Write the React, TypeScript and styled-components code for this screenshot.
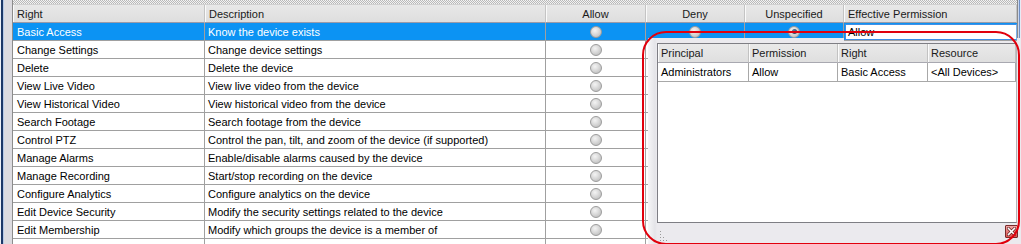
import React from 'react';
import styled, { createGlobalStyle, css } from 'styled-components';

const Global = createGlobalStyle`
  html, body { margin: 0; padding: 0; background: #ffffff; }
  body {
    width: 1021px; height: 244px; overflow: hidden;
    font-family: "Liberation Sans", Arial, sans-serif;
    font-size: 11px; color: #000;
  }
`;

const Screen = styled.div`
  position: relative;
  width: 1021px;
  height: 244px;
  display: flex;
  overflow: hidden;
  background: #dedde2;
`;

const FrameEdge = styled.div`
  flex: none;
  width: 4px;
  background: linear-gradient(to right, #eef1f7 0 1px, #1d3868 1px 3px, #b7c9e6 3px 4px);
`;

const RightEdge = styled.div`
  flex: none;
  width: 4px;
  background: linear-gradient(to right, #8a8a8a 0 1px, #c9d6ec 1px 2px, #6f8fc4 2px 3px, #e6ebf5 3px 4px);
`;

const Gutter = styled.div`
  flex: none;
  width: 8px;
  background: #dcdbe0;
  border-right: 1px solid #8c8c8c;
`;

const Main = styled.div`
  flex: 1;
  display: flex;
  flex-direction: column;
  min-width: 0;
  background: #fff;
`;

const Hatch = styled.div`
  flex: none;
  height: 5px;
  background-color: #f2f2f2;
  background-image: repeating-conic-gradient(#b9b9b9 0 25%, #f2f2f2 0 50%);
  background-size: 2px 2px;
  border-bottom: 1px solid #d0d0d0;
  box-sizing: border-box;
`;

const Grid = styled.div`
  display: grid;
  grid-template-columns: 192px 341px 100px 99px 99px 1fr;
  grid-auto-rows: 18px;
`;

const HeadCell = styled.div<{ $center?: boolean }>`
  height: 18px;
  box-sizing: border-box;
  background: linear-gradient(#e8e8e8, #dedede);
  border-right: 1px solid #c4c4c4;
  box-shadow: inset 1px 0 0 #fafafa;
  border-bottom: 1px solid #9a9aa8;
  display: flex;
  align-items: center;
  justify-content: ${p => (p.$center ? 'center' : 'flex-start')};
  padding-left: ${p => (p.$center ? '0' : '4px')};
  padding-top: 1px;
  white-space: nowrap;
  color: #1a1a1a;
`;

const Cell = styled.div<{ $selected?: boolean; $center?: boolean; $first?: boolean }>`
  box-sizing: border-box;
  height: 18px;
  border-right: 1px solid #a0a0a0;
  border-bottom: 1px solid #a0a0a0;
  display: flex;
  align-items: center;
  justify-content: ${p => (p.$center ? 'center' : 'flex-start')};
  padding-left: ${p => (p.$center ? '0' : p.$first ? '4px' : '3px')};
  padding-top: ${p => (p.$center ? '0' : '1px')};
  white-space: nowrap;
  overflow: hidden;
  ${p =>
    p.$selected &&
    css`
      background: #0c93f3;
      color: #fff;
    `}
`;

const EditorCell = styled.div`
  position: relative;
  z-index: 3;
  box-sizing: border-box;
  height: 18px;
  background: #0c93f3;
  border-bottom: 1px solid #a0a0a0;
  padding: 1px 0 0 1px;
  display: flex;
`;

const EditorBox = styled.div`
  flex: 1;
  background: #fff;
  border: 1px solid #3d8ee6;
  border-right-color: #7fb2ea;
  box-sizing: border-box;
  display: flex;
  align-items: center;
  padding-left: 2px;
  color: #000;
`;

const Radio = styled.span<{ $checked?: boolean }>`
  width: 12px;
  height: 12px;
  border-radius: 50%;
  box-sizing: border-box;
  border: 1px solid #9c9c9c;
  background: radial-gradient(circle at 40% 35%, #f4f4f4 0, #dcdcdc 40%, #b4b4b4 100%);
  display: flex;
  align-items: center;
  justify-content: center;
  ${p =>
    p.$checked &&
    css`
      &::after {
        content: '';
        width: 5px;
        height: 5px;
        border-radius: 50%;
        background: radial-gradient(circle at 40% 35%, #4f7fa8, #12304e);
      }
    `}
`;

/* Floating popup window */
const Popup = styled.div`
  position: absolute;
  left: 648px;
  top: 38px;
  width: 373px;
  height: 206px;
  z-index: 2;
  display: flex;
  flex-direction: column;
  background: linear-gradient(to right, #f6f6f8 0, #e4e4e8 7px, #ebeaee 9px);
`;

const List = styled.div`
  margin: 5px 4px 0 9px;
  height: 180px;
  flex: none;
  box-sizing: border-box;
  border: 1px solid #7e7e84;
  border-right-color: #b4b4b8;
  background: #fff;
  display: grid;
  grid-template-columns: 91px 89px 90px 1fr;
  grid-auto-rows: min-content;
`;

const ListHead = styled.div`
  height: 19px;
  box-sizing: border-box;
  background: linear-gradient(#e9e9e9, #dfdfdf);
  border-right: 1px solid #c2c2c2;
  box-shadow: inset 1px 0 0 #fbfbfb;
  border-bottom: 1px solid #a8a8b0;
  display: flex;
  align-items: center;
  padding-left: 3px;
  white-space: nowrap;
  color: #1a1a1a;
`;

const ListCell = styled.div`
  height: 19px;
  box-sizing: border-box;
  border-right: 1px solid #a8a8a8;
  border-bottom: 1px solid #a8a8a8;
  display: flex;
  align-items: center;
  padding-left: 3px;
  white-space: nowrap;
`;

const StatusBar = styled.div`
  flex: 1;
  display: flex;
  align-items: flex-start;
  justify-content: space-between;
  padding: 2px 3px 0 12px;
`;

const Grip = styled.svg`
  margin-top: 6px;
`;

const CloseButton = styled.button`
  width: 13px;
  height: 13px;
  padding: 0;
  border: 1px solid #7a2a2a;
  border-radius: 1px;
  background: linear-gradient(#f2a6a6, #d9534f);
  display: flex;
  align-items: center;
  justify-content: center;
`;

const Annotation = styled.div`
  position: absolute;
  left: 642px;
  top: 31px;
  width: 378px;
  height: 214px;
  box-sizing: border-box;
  border: 2px solid #e1000c;
  border-radius: 24px;
  z-index: 5;
  pointer-events: none;
`;

const rights: [string, string][] = [
  ['Basic Access', 'Know the device exists'],
  ['Change Settings', 'Change device settings'],
  ['Delete', 'Delete the device'],
  ['View Live Video', 'View live video from the device'],
  ['View Historical Video', 'View historical video from the device'],
  ['Search Footage', 'Search footage from the device'],
  ['Control PTZ', 'Control the pan, tilt, and zoom of the device (if supported)'],
  ['Manage Alarms', 'Enable/disable alarms caused by the device'],
  ['Manage Recording', 'Start/stop recording on the device'],
  ['Configure Analytics', 'Configure analytics on the device'],
  ['Edit Device Security', 'Modify the security settings related to the device'],
  ['Edit Membership', 'Modify which groups the device is a member of'],
  ['', ''],
];

export default function App() {
  return (
    <>
      <Global />
      <Screen>
        <FrameEdge />
        <Gutter />
        <Main>
          <Hatch />
          <Grid>
            <HeadCell>Right</HeadCell>
            <HeadCell>Description</HeadCell>
            <HeadCell $center>Allow</HeadCell>
            <HeadCell $center>Deny</HeadCell>
            <HeadCell $center>Unspecified</HeadCell>
            <HeadCell>Effective Permission</HeadCell>
            {rights.map(([name, desc], i) => {
              const sel = i === 0;
              const empty = name === '';
              return (
                <React.Fragment key={i}>
                  <Cell $selected={sel} $first>{name}</Cell>
                  <Cell $selected={sel}>{desc}</Cell>
                  <Cell $selected={sel} $center>{!empty && <Radio />}</Cell>
                  <Cell $selected={sel} $center>{!empty && <Radio />}</Cell>
                  <Cell $selected={sel} $center>{!empty && <Radio $checked={sel} />}</Cell>
                  {sel ? (
                    <EditorCell>
                      <EditorBox>Allow</EditorBox>
                    </EditorCell>
                  ) : (
                    <Cell />
                  )}
                </React.Fragment>
              );
            })}
          </Grid>
        </Main>
        <RightEdge />

        <Popup>
          <List>
            <ListHead>Principal</ListHead>
            <ListHead>Permission</ListHead>
            <ListHead>Right</ListHead>
            <ListHead>Resource</ListHead>
            <ListCell>Administrators</ListCell>
            <ListCell>Allow</ListCell>
            <ListCell>Basic Access</ListCell>
            <ListCell>&lt;All Devices&gt;</ListCell>
          </List>
          <StatusBar>
            <Grip width="9" height="10" viewBox="0 0 9 10">
              <g fill="#9a9a9a">
                <rect x="0" y="0" width="1" height="1" />
                <rect x="0" y="3" width="1" height="1" />
                <rect x="0" y="6" width="1" height="1" />
                <rect x="0" y="9" width="1" height="1" />
                <rect x="3" y="6" width="1" height="1" />
                <rect x="3" y="9" width="1" height="1" />
                <rect x="6" y="9" width="1" height="1" />
              </g>
            </Grip>
            <CloseButton aria-label="Close">
              <svg width="9" height="9" viewBox="0 0 9 9">
                <path d="M1.5 1.5 L7.5 7.5 M7.5 1.5 L1.5 7.5" stroke="#5a1a1a" strokeWidth="3" strokeLinecap="square" />
                <path d="M1.5 1.5 L7.5 7.5 M7.5 1.5 L1.5 7.5" stroke="#ffffff" strokeWidth="1.6" strokeLinecap="square" />
              </svg>
            </CloseButton>
          </StatusBar>
        </Popup>
        <Annotation />
      </Screen>
    </>
  );
}
